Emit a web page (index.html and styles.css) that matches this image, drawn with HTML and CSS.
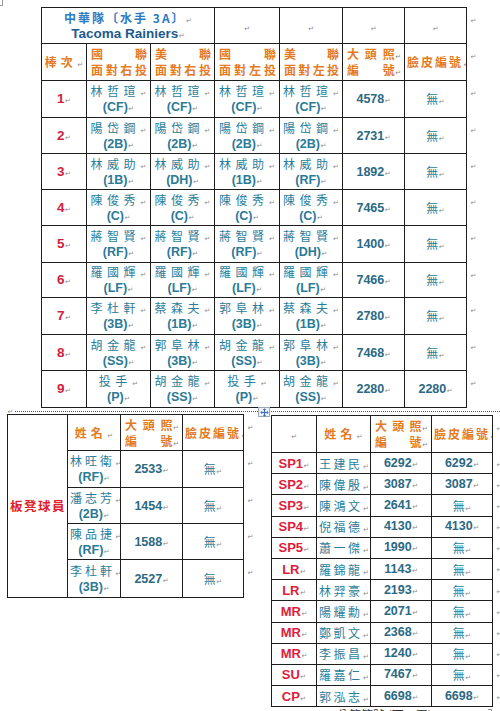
FILE: index.html
```html
<!DOCTYPE html>
<html lang="zh-Hant">
<head>
<meta charset="utf-8">
<title>中華隊 水手 3A</title>
<link rel="stylesheet" href="styles.css">
</head>
<body>
<div class="page">
  <div class="corner"></div>

  <table class="t main">
    <colgroup>
      <col class="w45"><col class="w64"><col class="w64"><col class="w65"><col class="w63"><col class="w62"><col class="w62"><col class="w12">
    </colgroup>
    <tr class="h36">
      <td colspan="3" class="ttl"><div class="ttl1 m">中華隊〔水手 3A〕</div><div class="ttl2 m">Tacoma Rainiers</div></td>
      <td><span class="m"></span></td>
      <td><span class="m"></span></td>
      <td><span class="m"></span></td>
      <td><span class="m"></span></td>
      <td class="re"><span class="m"></span></td>
    </tr>
    <tr class="h37">
      <td class="hd"><span class="m sp4">棒次</span></td>
      <td class="hd dcell"><div class="dj"><span>國</span><span>聯</span></div><div class="dj"><span>面</span><span>對</span><span>右</span><span>投</span></div></td>
      <td class="hd dcell"><div class="dj"><span>美</span><span>聯</span></div><div class="dj"><span>面</span><span>對</span><span>右</span><span>投</span></div></td>
      <td class="hd dcell"><div class="dj"><span>國</span><span>聯</span></div><div class="dj"><span>面</span><span>對</span><span>左</span><span>投</span></div></td>
      <td class="hd dcell"><div class="dj"><span>美</span><span>聯</span></div><div class="dj"><span>面</span><span>對</span><span>左</span><span>投</span></div></td>
      <td class="hd dcell"><div class="dj"><span>大</span><span>頭</span><span class="m">照</span></div><div class="dj"><span>編</span><span class="m">號</span></div></td>
      <td class="hd"><span class="m sp2">臉皮編號</span></td>
      <td class="re"><span class="m"></span></td>
    </tr>
    <tr class="h37">
      <td class="bat"><span class="m">1</span></td>
      <td><div class="nm m">林哲瑄</div><div class="ps m">(CF)</div></td>
      <td><div class="nm m">林哲瑄</div><div class="ps m">(CF)</div></td>
      <td><div class="nm m">林哲瑄</div><div class="ps m">(CF)</div></td>
      <td><div class="nm m">林哲瑄</div><div class="ps m">(CF)</div></td>
      <td class="num"><span class="m">4578</span></td>
      <td class="wu"><span class="m">無</span></td>
      <td class="re"><span class="m"></span></td>
    </tr>
    <tr class="h36">
      <td class="bat"><span class="m">2</span></td>
      <td><div class="nm m">陽岱鋼</div><div class="ps m">(2B)</div></td>
      <td><div class="nm m">陽岱鋼</div><div class="ps m">(2B)</div></td>
      <td><div class="nm m">陽岱鋼</div><div class="ps m">(2B)</div></td>
      <td><div class="nm m">陽岱鋼</div><div class="ps m">(2B)</div></td>
      <td class="num"><span class="m">2731</span></td>
      <td class="wu"><span class="m">無</span></td>
      <td class="re"><span class="m"></span></td>
    </tr>
    <tr class="h36">
      <td class="bat"><span class="m">3</span></td>
      <td><div class="nm m">林威助</div><div class="ps m">(1B)</div></td>
      <td><div class="nm m">林威助</div><div class="ps m">(DH)</div></td>
      <td><div class="nm m">林威助</div><div class="ps m">(1B)</div></td>
      <td><div class="nm m">林威助</div><div class="ps m">(RF)</div></td>
      <td class="num"><span class="m">1892</span></td>
      <td class="wu"><span class="m">無</span></td>
      <td class="re"><span class="m"></span></td>
    </tr>
    <tr class="h36">
      <td class="bat"><span class="m">4</span></td>
      <td><div class="nm m">陳俊秀</div><div class="ps m">(C)</div></td>
      <td><div class="nm m">陳俊秀</div><div class="ps m">(C)</div></td>
      <td><div class="nm m">陳俊秀</div><div class="ps m">(C)</div></td>
      <td><div class="nm m">陳俊秀</div><div class="ps m">(C)</div></td>
      <td class="num"><span class="m">7465</span></td>
      <td class="wu"><span class="m">無</span></td>
      <td class="re"><span class="m"></span></td>
    </tr>
    <tr class="h37">
      <td class="bat"><span class="m">5</span></td>
      <td><div class="nm m">蔣智賢</div><div class="ps m">(RF)</div></td>
      <td><div class="nm m">蔣智賢</div><div class="ps m">(RF)</div></td>
      <td><div class="nm m">蔣智賢</div><div class="ps m">(RF)</div></td>
      <td><div class="nm m">蔣智賢</div><div class="ps m">(DH)</div></td>
      <td class="num"><span class="m">1400</span></td>
      <td class="wu"><span class="m">無</span></td>
      <td class="re"><span class="m"></span></td>
    </tr>
    <tr class="h35">
      <td class="bat"><span class="m">6</span></td>
      <td><div class="nm m">羅國輝</div><div class="ps m">(LF)</div></td>
      <td><div class="nm m">羅國輝</div><div class="ps m">(LF)</div></td>
      <td><div class="nm m">羅國輝</div><div class="ps m">(LF)</div></td>
      <td><div class="nm m">羅國輝</div><div class="ps m">(LF)</div></td>
      <td class="num"><span class="m">7466</span></td>
      <td class="wu"><span class="m">無</span></td>
      <td class="re"><span class="m"></span></td>
    </tr>
    <tr class="h37">
      <td class="bat"><span class="m">7</span></td>
      <td><div class="nm m">李杜軒</div><div class="ps m">(3B)</div></td>
      <td><div class="nm m">蔡森夫</div><div class="ps m">(1B)</div></td>
      <td><div class="nm m">郭阜林</div><div class="ps m">(3B)</div></td>
      <td><div class="nm m">蔡森夫</div><div class="ps m">(1B)</div></td>
      <td class="num"><span class="m">2780</span></td>
      <td class="wu"><span class="m">無</span></td>
      <td class="re"><span class="m"></span></td>
    </tr>
    <tr class="h36">
      <td class="bat"><span class="m">8</span></td>
      <td><div class="nm m">胡金龍</div><div class="ps m">(SS)</div></td>
      <td><div class="nm m">郭阜林</div><div class="ps m">(3B)</div></td>
      <td><div class="nm m">胡金龍</div><div class="ps m">(SS)</div></td>
      <td><div class="nm m">郭阜林</div><div class="ps m">(3B)</div></td>
      <td class="num"><span class="m">7468</span></td>
      <td class="wu"><span class="m">無</span></td>
      <td class="re"><span class="m"></span></td>
    </tr>
    <tr class="h37">
      <td class="bat"><span class="m">9</span></td>
      <td><div class="nm m">投手</div><div class="ps m">(P)</div></td>
      <td><div class="nm m">胡金龍</div><div class="ps m">(SS)</div></td>
      <td><div class="nm m">投手</div><div class="ps m">(P)</div></td>
      <td><div class="nm m">胡金龍</div><div class="ps m">(SS)</div></td>
      <td class="num"><span class="m">2280</span></td>
      <td class="num"><span class="m">2280</span></td>
      <td class="re"><span class="m"></span></td>
    </tr>
  </table>

  <div class="sep">
    <span class="m sepmark"></span>
    <span class="dots"></span>
    <span class="handle"><svg width="9" height="9" viewBox="0 0 9 9"><path d="M4.5 0.3 L6.3 2.1 H5.1 V3.9 H6.9 V2.7 L8.7 4.5 L6.9 6.3 V5.1 H5.1 V6.9 H6.3 L4.5 8.7 L2.7 6.9 H3.9 V5.1 H2.1 V6.3 L0.3 4.5 L2.1 2.7 V3.9 H3.9 V2.1 H2.7 Z" fill="#3d6fb8"/></svg></span>
  </div>

  <div class="cols">
    <div class="colL">
      <table class="t bench">
        <colgroup><col class="w60"><col class="w53"><col class="w62"><col class="w61"><col class="w12"></colgroup>
        <tr class="h36">
          <td rowspan="5" class="bl"><span class="m">板凳球員</span></td>
          <td class="hd"><span class="m sp4">姓名</span></td>
          <td class="hd dcell"><div class="dj"><span>大</span><span>頭</span><span class="m">照</span></div><div class="dj"><span>編</span><span class="m">號</span></div></td>
          <td class="hd"><span class="m sp2">臉皮編號</span></td>
          <td class="re"><span class="m"></span></td>
        </tr>
        <tr class="h37">
          <td><div class="nm2 m">林旺衛</div><div class="ps m">(RF)</div></td>
          <td class="num"><span class="m">2533</span></td>
          <td class="wu"><span class="m">無</span></td>
          <td class="re"><span class="m"></span></td>
        </tr>
        <tr class="h36">
          <td><div class="nm2 m">潘志芳</div><div class="ps m">(2B)</div></td>
          <td class="num"><span class="m">1454</span></td>
          <td class="wu"><span class="m">無</span></td>
          <td class="re"><span class="m"></span></td>
        </tr>
        <tr class="h36">
          <td><div class="nm2 m">陳品捷</div><div class="ps m">(RF)</div></td>
          <td class="num"><span class="m">1588</span></td>
          <td class="wu"><span class="m">無</span></td>
          <td class="re"><span class="m"></span></td>
        </tr>
        <tr class="h38">
          <td><div class="nm2 m">李杜軒</div><div class="ps m">(3B)</div></td>
          <td class="num"><span class="m">2527</span></td>
          <td class="wu"><span class="m">無</span></td>
          <td class="re"><span class="m"></span></td>
        </tr>
      </table>
    </div>

    <div class="colR">
      <table class="t pit">
        <colgroup><col class="w45"><col class="w54"><col class="w61"><col class="w61"><col class="w8"></colgroup>
        <tr class="h37">
          <td><span class="m"></span></td>
          <td class="hd"><span class="m sp4">姓名</span></td>
          <td class="hd dcell"><div class="dj"><span>大</span><span>頭</span><span class="m">照</span></div><div class="dj"><span>編</span><span class="m">號</span></div></td>
          <td class="hd"><span class="m sp2">臉皮編號</span></td>
          <td class="re"><span class="m"></span></td>
        </tr>
        <tr class="hp"><td class="role"><span class="m">SP1</span></td><td class="pn"><span class="m">王建民</span></td><td class="num"><span class="m">6292</span></td><td class="num"><span class="m">6292</span></td><td class="re"><span class="m"></span></td></tr>
        <tr class="hp"><td class="role"><span class="m">SP2</span></td><td class="pn"><span class="m">陳偉殷</span></td><td class="num"><span class="m">3087</span></td><td class="num"><span class="m">3087</span></td><td class="re"><span class="m"></span></td></tr>
        <tr class="hp"><td class="role"><span class="m">SP3</span></td><td class="pn"><span class="m">陳鴻文</span></td><td class="num"><span class="m">2641</span></td><td class="wu"><span class="m">無</span></td><td class="re"><span class="m"></span></td></tr>
        <tr class="hp"><td class="role"><span class="m">SP4</span></td><td class="pn"><span class="m">倪福德</span></td><td class="num"><span class="m">4130</span></td><td class="num"><span class="m">4130</span></td><td class="re"><span class="m"></span></td></tr>
        <tr class="hp"><td class="role"><span class="m">SP5</span></td><td class="pn"><span class="m">蕭一傑</span></td><td class="num"><span class="m">1990</span></td><td class="wu"><span class="m">無</span></td><td class="re"><span class="m"></span></td></tr>
        <tr class="hp"><td class="role"><span class="m">LR</span></td><td class="pn"><span class="m">羅錦龍</span></td><td class="num"><span class="m">1143</span></td><td class="wu"><span class="m">無</span></td><td class="re"><span class="m"></span></td></tr>
        <tr class="hp"><td class="role"><span class="m">LR</span></td><td class="pn"><span class="m">林羿豪</span></td><td class="num"><span class="m">2193</span></td><td class="wu"><span class="m">無</span></td><td class="re"><span class="m"></span></td></tr>
        <tr class="hp"><td class="role"><span class="m">MR</span></td><td class="pn"><span class="m">陽耀勳</span></td><td class="num"><span class="m">2071</span></td><td class="wu"><span class="m">無</span></td><td class="re"><span class="m"></span></td></tr>
        <tr class="hp"><td class="role"><span class="m">MR</span></td><td class="pn"><span class="m">鄭凱文</span></td><td class="num"><span class="m">2368</span></td><td class="wu"><span class="m">無</span></td><td class="re"><span class="m"></span></td></tr>
        <tr class="hp"><td class="role"><span class="m">MR</span></td><td class="pn"><span class="m">李振昌</span></td><td class="num"><span class="m">1240</span></td><td class="wu"><span class="m">無</span></td><td class="re"><span class="m"></span></td></tr>
        <tr class="hp"><td class="role"><span class="m">SU</span></td><td class="pn"><span class="m">羅嘉仁</span></td><td class="num"><span class="m">7467</span></td><td class="wu"><span class="m">無</span></td><td class="re"><span class="m"></span></td></tr>
        <tr class="hp"><td class="role"><span class="m">CP</span></td><td class="pn"><span class="m">郭泓志</span></td><td class="num"><span class="m">6698</span></td><td class="num"><span class="m">6698</span></td><td class="re"><span class="m"></span></td></tr>
      </table>
      <div class="secbreak"><span class="m sbmark"></span><span class="sbtext">分節符號 (下一頁)</span><span class="sbcorner"></span></div>
    </div>
  </div>
</div>
</body>
</html>
```

FILE: styles.css
```css
* { box-sizing: border-box; }
html, body { margin: 0; padding: 0; background: #fff; }
body {
  width: 500px;
  height: 711px;
  overflow: hidden;
  font-family: "Liberation Sans", "Noto Sans CJK TC", sans-serif;
  color: #222;
}
.page { width: 500px; }

.corner {
  width: 3px;
  height: 6px;
  border-right: 1px solid #9a9a9a;
  border-bottom: 1px solid #9a9a9a;
  margin-bottom: 1px;
}

/* tables */
.t { border-collapse: collapse; table-layout: fixed; }
.t td {
  border: 1.5px solid #1e1e1e;
  padding: 0 2px;
  text-align: center;
  vertical-align: middle;
  overflow: hidden;
  white-space: nowrap;
  line-height: 16px;
}
.t td.re {
  border: none;
  text-align: left;
  vertical-align: top;
  padding: 4px 0 0 3px;
  line-height: 12px;
}
.main { margin-left: 41px; width: 437px; }
.bench { width: 248px; }
.pit { width: 229px; margin-top: 1px; }

col.w8 { width: 8px; }
col.w12 { width: 12px; }
col.w45 { width: 45px; }
col.w53 { width: 53px; }
col.w54 { width: 54px; }
col.w60 { width: 60px; }
col.w61 { width: 61px; }
col.w62 { width: 62px; }
col.w63 { width: 63px; }
col.w64 { width: 64px; }
col.w65 { width: 65px; }

tr.h35 { height: 35px; }
tr.h36 { height: 36px; }
tr.h37 { height: 37px; }
tr.h38 { height: 38px; }
tr.hp { height: 21.2px; }

/* paragraph marks */
.m::after {
  content: "↵";
  font-family: "DejaVu Sans", sans-serif;
  font-weight: normal;
  font-size: 7px;
  line-height: 0;
  color: #8c8c8c;
  letter-spacing: 0;
  margin-left: 0.5px;
}

/* title */
.ttl1 {
  font-family: "Noto Sans CJK TC", sans-serif;
  font-weight: bold;
  font-size: 12px;
  letter-spacing: 2px;
  color: #2c79c4;
}
.ttl2 {
  font-family: "Liberation Sans", sans-serif;
  font-weight: bold;
  font-size: 13.5px;
  color: #1d5b8c;
}

/* headers */
.hd {
  font-family: "Noto Sans CJK TC", sans-serif;
  font-weight: bold;
  font-size: 12px;
  color: #e47a22;
}
.t td.dcell { padding: 0 3px 0 4px; }
.dj {
  display: flex;
  justify-content: space-between;
  line-height: 16px;
}
.sp4 { letter-spacing: 4px; }
.sp2 { letter-spacing: 2px; }

/* body cells */
.bat {
  font-weight: bold;
  font-size: 13.5px;
  color: #d3203a;
}
.nm {
  font-family: "Noto Sans CJK TC", sans-serif;
  font-size: 12px;
  letter-spacing: 4.5px;
  color: #2b7e9b;
}
.nm2 {
  font-family: "Noto Sans CJK TC", sans-serif;
  font-size: 12px;
  letter-spacing: 3px;
  color: #2b7e9b;
}
.ps {
  font-weight: bold;
  font-size: 12.5px;
  color: #2b7a96;
}
.num {
  font-weight: bold;
  font-size: 12.5px;
  color: #2b6984;
}
.wu {
  font-family: "Noto Sans CJK TC", sans-serif;
  font-size: 12px;
  color: #2b7e9b;
}
.bl {
  font-family: "Noto Sans CJK TC", sans-serif;
  font-weight: bold;
  font-size: 12.5px;
  letter-spacing: 1.5px;
  color: #e0202c;
}
.role {
  font-weight: bold;
  font-size: 13px;
  color: #e0203a;
}
.pn {
  font-family: "Noto Sans CJK TC", sans-serif;
  font-size: 12px;
  letter-spacing: 2.5px;
  color: #2b7e9b;
}
.t .hp td { line-height: 15px; }
.t .hp td.re { padding-top: 3px; line-height: 12px; }

/* separator between sections */
.sep {
  position: relative;
  display: flex;
  align-items: flex-end;
  height: 6px;
  padding-left: 7px;
}
.sepmark { line-height: 8px; margin-bottom: 1px; }
.dots {
  flex: 1;
  border-bottom: 1px dotted #555;
  margin-bottom: 2px;
  margin-left: 2px;
}
.handle {
  position: absolute;
  left: 258px;
  top: -1px;
  width: 12px;
  height: 10px;
  border: 1px solid #9aa7b8;
  background: #eef2f8;
  display: flex;
  align-items: center;
  justify-content: center;
}
.handle svg { display: block; }

/* lower columns */
.cols {
  display: flex;
  align-items: flex-start;
  padding-left: 7px;
}
.colL { width: 264px; flex: none; }
.colR { flex: none; }

.secbreak {
  display: flex;
  align-items: flex-start;
  width: 229px;
  height: 14px;
  margin-left: -4px;
}
.sbmark { width: 70px; line-height: 10px; }
.sbtext {
  font-family: "Noto Sans CJK TC", sans-serif;
  font-size: 12px;
  line-height: 12px;
  color: #333;
  margin-top: 2px;
}
.sbcorner {
  margin-left: auto;
  margin-right: 4px;
  margin-top: 2px;
  width: 4px;
  height: 6px;
  border-top: 1px solid #999;
  border-right: 1px solid #999;
}
```
